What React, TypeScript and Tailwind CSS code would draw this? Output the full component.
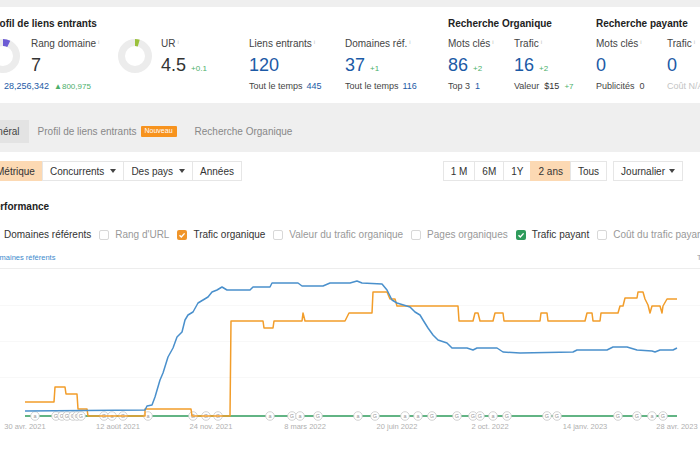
import React from 'react';

const blue = [
  [25, 411], [145, 410], [147, 406], [152, 405], [155, 397], [160, 380], [163, 373], [168, 357], [173, 348],
  [177, 337], [182, 332], [185, 320], [188, 315], [193, 312], [198, 303], [203, 300], [208, 297], [212, 292],
  [217, 290], [222, 287], [227, 290], [250, 290], [253, 287], [270, 287], [272, 283], [298, 283], [302, 286],
  [323, 286], [330, 283], [350, 283], [357, 281], [362, 283], [382, 284], [387, 290], [392, 300], [397, 303],
  [410, 307], [415, 312], [420, 315], [423, 320], [428, 328], [433, 335], [438, 340], [447, 343], [452, 348],
  [467, 348], [473, 350], [477, 348], [497, 348], [503, 352], [520, 353], [573, 352], [577, 350], [607, 350],
  [613, 347], [627, 347], [637, 350], [652, 351], [655, 352], [660, 350], [673, 350], [677, 348],
];

const orange = [
  [25, 402], [54, 402], [55, 387], [65, 387], [66, 394], [77, 394], [78, 409], [87, 409], [88, 416], [145, 416],
  [145, 409], [191, 409], [192, 416], [230, 416], [231, 321], [263, 321], [264, 328], [273, 328], [274, 321],
  [302, 321], [303, 313], [305, 321], [345, 321], [349, 313], [372, 313], [373, 292], [387, 292], [390, 299],
  [395, 299], [397, 306], [458, 306], [459, 321], [473, 321], [475, 313], [478, 313], [480, 321], [493, 321],
  [495, 313], [503, 313], [504, 321], [540, 321], [541, 313], [547, 313], [548, 321], [585, 321], [587, 313],
  [592, 313], [593, 321], [600, 321], [601, 313], [618, 313], [620, 306], [623, 306], [625, 298], [637, 298],
  [638, 292], [643, 292], [645, 299], [648, 305], [650, 313], [652, 306], [660, 306], [662, 313], [663, 306],
  [667, 299], [677, 299],
];

const markers: [number, string][] = [
  [35, 'a'], [56, 'G'], [62, 'G'], [67, 'G'], [73, 'G'], [77, 'G'], [81, 'G'], [104, 'G'], [112, 'a'],
  [123, 'G'], [148, 'a'], [193, 'G'], [206, 'G'], [218, 'G'], [270, 'a'], [292, 'G'], [300, 'a'], [318, 'G'],
  [358, 'a'], [375, 'G'], [405, 'a'], [418, 'a'], [432, 'G'], [457, 'G'], [473, 'G'], [480, 'G'], [493, 'a'],
  [507, 'G'], [547, 'G'], [557, 'G'], [618, 'G'], [637, 'G'], [652, 'a'], [663, 'G'],
];

const dates: [number, string][] = [
  [25, '30 avr. 2021'], [118, '12 août 2021'], [211, '24 nov. 2021'], [305, '8 mars 2022'],
  [397, '20 juin 2022'], [490, '2 oct. 2022'], [585, '14 janv. 2023'], [677, '28 avr. 2023'],
];

const pts = (list: number[][]) => list.map(([x, y]) => `${x},${y}`).join(' ');

const Donut = ({ pct, color }: { pct: number; color: string }) => {
  const r = 13.5;
  const c = 2 * Math.PI * r;
  return (
    <svg width="34" height="34" viewBox="0 0 34 34" className="shrink-0">
      <circle cx="17" cy="17" r={r} fill="none" stroke="#ececec" strokeWidth="7" />
      <circle
        cx="17"
        cy="17"
        r={r}
        fill="none"
        stroke={color}
        strokeWidth="7"
        strokeDasharray={`${c * pct} ${c}`}
        transform="rotate(-90 17 17)"
      />
    </svg>
  );
};

const Label = ({ children }: { children: React.ReactNode }) => (
  <div className="text-[10px] leading-[12px] text-[#444] whitespace-nowrap">
    {children}
    <sup className="ml-[2px] text-[6px] text-[#bbb]">i</sup>
  </div>
);

const Value = ({ value, delta, dark }: { value: string; delta?: string; dark?: boolean }) => (
  <div className="mt-[5px] flex items-baseline h-[20px]">
    <span className={`text-[18px] leading-[20px] ${dark ? 'text-[#333]' : 'text-[#1c5aa6]'}`}>{value}</span>
    {delta && <span className="ml-[5px] text-[8px] text-[#4caf6a]">{delta}</span>}
  </div>
);

const Sub = ({ children }: { children: React.ReactNode }) => (
  <div className="mt-[5px] text-[9px] leading-[12px] text-[#444] whitespace-nowrap">{children}</div>
);

const Caret = ({ gap }: { gap: string }) => (
  <svg width="6" height="4" viewBox="0 0 6 4" className={gap}>
    <path d="M0 0h6L3 4z" fill="#444" />
  </svg>
);

const Check = ({ color }: { color?: string }) =>
  color ? (
    <span className="w-[10px] h-[10px] rounded-[2px] flex items-center justify-center shrink-0" style={{ background: color }}>
      <svg width="8" height="8" viewBox="0 0 8 8">
        <path d="M1.5 4.2l1.8 1.8L6.6 2.4" fill="none" stroke="#fff" strokeWidth="1.4" />
      </svg>
    </span>
  ) : (
    <span className="w-[10px] h-[10px] rounded-[2px] border border-[#d8d8d8] bg-white shrink-0" />
  );

const Option = ({ color, on, children }: { color?: string; on?: boolean; children: React.ReactNode }) => (
  <div className="flex items-center gap-[6px] whitespace-nowrap">
    <Check color={color} />
    <span className={on ? 'text-[#333]' : 'text-[#999]'}>{children}</span>
  </div>
);

const Btn = ({ active, caret, children }: { active?: boolean; caret?: string; children: React.ReactNode }) => (
  <div
    className={`h-[20px] px-[7px] -ml-px first:ml-0 flex items-center border border-[#e6e6e6] text-[10px] text-[#333] whitespace-nowrap ${
      active ? 'bg-[#fcd9b3] border-[#fcd9b3]' : 'bg-white'
    }`}
  >
    {children}
    {caret && <Caret gap={caret} />}
  </div>
);

export default function App() {
  return (
    <div className="w-[700px] h-[450px] overflow-hidden bg-[#efefef] flex flex-col font-['Liberation_Sans',Arial,sans-serif]">
      {/* metrics panel */}
      <div className="mt-[7px] h-[96px] shrink-0 bg-white flex items-start pt-[11px]">
        <div className="w-[462px] shrink-0 -ml-[14px] flex flex-col">
          <div className="ml-[3px] text-[10px] leading-[12px] font-bold text-[#222]">Profil de liens entrants</div>
          <div className="mt-[8px] flex">
            <div className="w-[132px] shrink-0 flex flex-col">
              <div className="flex">
                <div className="mt-[1px]">
                  <Donut pct={0.07} color="#6c5bd4" />
                </div>
                <div className="ml-[11px] flex flex-col">
                  <Label>Rang domaine</Label>
                  <Value value="7" dark />
                </div>
              </div>
              <div className="ml-[18px] mt-[5px] text-[9px] leading-[12px] whitespace-nowrap">
                <span className="text-[#1c5aa6]">28,256,342</span>
                <span className="ml-[5px] text-[8px] text-[#4caf6a]">▲800,975</span>
              </div>
            </div>
            <div className="w-[131px] shrink-0 flex">
              <div className="mt-[1px]">
                <Donut pct={0.045} color="#9bc13c" />
              </div>
              <div className="ml-[9px] flex flex-col">
                <Label>UR</Label>
                <Value value="4.5" delta="+0.1" dark />
              </div>
            </div>
            <div className="w-[96px] shrink-0 flex flex-col">
              <Label>Liens entrants</Label>
              <Value value="120" />
              <Sub>
                Tout le temps<span className="ml-[4px] text-[#1c5aa6]">445</span>
              </Sub>
            </div>
            <div className="w-[103px] shrink-0 flex flex-col">
              <Label>Domaines réf.</Label>
              <Value value="37" delta="+1" />
              <Sub>
                Tout le temps<span className="ml-[4px] text-[#1c5aa6]">116</span>
              </Sub>
            </div>
          </div>
        </div>

        <div className="w-[148px] shrink-0 flex flex-col">
          <div className="text-[10px] leading-[12px] font-bold text-[#222] whitespace-nowrap">Recherche Organique</div>
          <div className="mt-[8px] flex">
            <div className="w-[66px] shrink-0 flex flex-col">
              <Label>Mots clés</Label>
              <Value value="86" delta="+2" />
              <Sub>
                Top 3<span className="ml-[5px] text-[#1c5aa6]">1</span>
              </Sub>
            </div>
            <div className="w-[82px] shrink-0 flex flex-col">
              <Label>Trafic</Label>
              <Value value="16" delta="+2" />
              <Sub>
                Valeur<span className="ml-[5px] text-[#333]">$15</span>
                <span className="ml-[5px] text-[8px] text-[#4caf6a]">+7</span>
              </Sub>
            </div>
          </div>
        </div>

        <div className="flex flex-col">
          <div className="text-[10px] leading-[12px] font-bold text-[#222] whitespace-nowrap">Recherche payante</div>
          <div className="mt-[8px] flex">
            <div className="w-[71px] shrink-0 flex flex-col">
              <Label>Mots clés</Label>
              <Value value="0" />
              <Sub>
                Publicités<span className="ml-[5px]">0</span>
              </Sub>
            </div>
            <div className="flex flex-col">
              <Label>Trafic</Label>
              <Value value="0" />
              <div className="mt-[5px] text-[9px] leading-[12px] text-[#c4c4c4] whitespace-nowrap">Coût N/A</div>
            </div>
          </div>
        </div>
      </div>

      {/* tabs */}
      <div className="h-[49px] shrink-0 pt-[17px] flex items-start text-[10px]">
        <div className="-ml-[25px] h-[23px] px-[9px] flex items-center bg-[#e3e3e3] text-[#444]">Général</div>
        <div className="h-[23px] px-[9px] flex items-center text-[#888] whitespace-nowrap">
          Profil de liens entrants
          <span className="ml-[4px] h-[11px] px-[4px] flex items-center bg-[#f7931e] text-white text-[7px] rounded-[1px]">
            Nouveau
          </span>
        </div>
        <div className="h-[23px] px-[9px] flex items-center text-[#888] whitespace-nowrap">Recherche Organique</div>
      </div>

      {/* content */}
      <div className="flex-1 bg-white flex flex-col">
        <div className="mt-[9px] flex justify-between">
          <div className="-ml-[12px] flex">
            <Btn active>Métrique</Btn>
            <Btn caret="ml-[6px]">Concurrents</Btn>
            <Btn caret="ml-[6px]">Des pays</Btn>
            <Btn>Années</Btn>
          </div>
          <div className="mr-[17px] flex">
            <div className="flex">
              <Btn>1 M</Btn>
              <Btn>6M</Btn>
              <Btn>1Y</Btn>
              <Btn active>2 ans</Btn>
              <Btn>Tous</Btn>
            </div>
            <div className="ml-[6px] flex">
              <Btn caret="ml-[4px]">Journalier</Btn>
            </div>
          </div>
        </div>

        <div className="mt-[20px] -ml-[12px] text-[10px] leading-[12px] font-bold text-[#222]">Performance</div>

        <div className="mt-[16px] -ml-[12px] h-[12px] flex items-center gap-[8px] text-[10px] leading-[12px]">
          <Option color="#3d8bcd" on>Domaines référents</Option>
          <Option>Rang d'URL</Option>
          <Option color="#f0952a" on>Trafic organique</Option>
          <Option>Valeur du trafic organique</Option>
          <Option>Pages organiques</Option>
          <Option color="#2e9b5b" on>Trafic payant</Option>
          <Option>Coût du trafic payant</Option>
        </div>

        <div className="mt-[12px] h-[9px] flex justify-between text-[7.5px] leading-[9px]">
          <span className="-ml-[10px] text-[#3d8bcd] whitespace-nowrap">Domaines référents</span>
          <span className="w-[3px] overflow-hidden whitespace-nowrap text-[#999]">Trafic</span>
        </div>

        <svg width="700" height="182" viewBox="0 268 700 182" className="mt-[6px] shrink-0">
          <line x1="0" y1="268.5" x2="700" y2="268.5" stroke="#ededed" />
          {[305, 341, 377].map((y) => (
            <line key={y} x1="0" y1={y + 0.5} x2="700" y2={y + 0.5} stroke="#f8f8f8" />
          ))}
          <line x1="25" y1="416" x2="677" y2="416" stroke="#2e9b5b" strokeWidth="1.5" />
          {markers.map(([x, t], i) => (
            <g key={i}>
              <circle cx={x} cy="416" r="4.3" fill="#fff" stroke="#c6c6c6" strokeWidth="0.8" />
              <text x={x} y="418.2" textAnchor="middle" fontSize="5.5" fill="#999">
                {t}
              </text>
            </g>
          ))}
          <polyline points={pts(orange)} fill="none" stroke="#f29d2a" strokeWidth="1.5" strokeLinejoin="round" />
          <polyline points={pts(blue)} fill="none" stroke="#4a90cc" strokeWidth="1.5" strokeLinejoin="round" />
          {dates.map(([x, t]) => (
            <text key={t} x={x} y="429" textAnchor="middle" fontSize="7.5" fill="#b0b0b0">
              {t}
            </text>
          ))}
        </svg>
      </div>
    </div>
  );
}
